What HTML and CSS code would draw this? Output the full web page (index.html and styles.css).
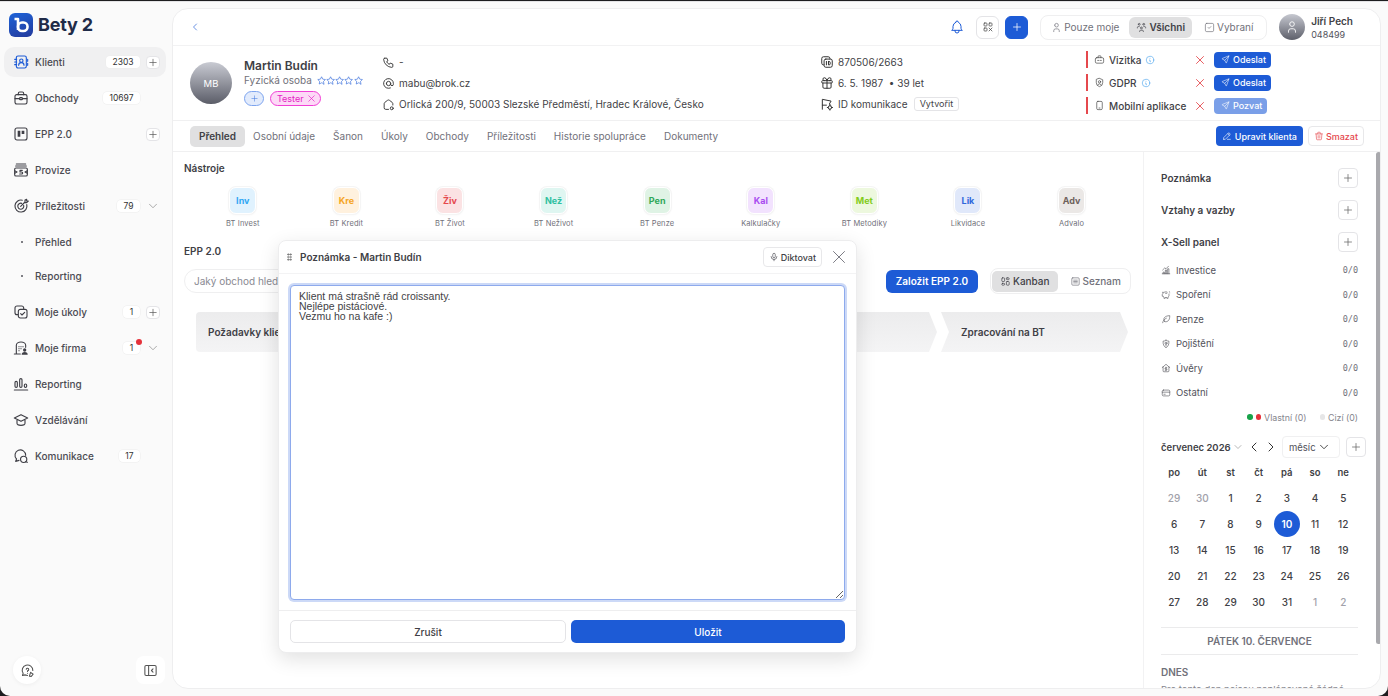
FILE: index.html
```html
<!DOCTYPE html>
<html lang="cs">
<head>
    <meta charset="UTF-8">
    <title>Bety 2 - Klienti</title>
    <link rel="stylesheet" href="styles.css">
</head>
<body>
<svg class="defs" width="0" height="0">
    <symbol id="i-plus" viewBox="0 0 24 24"><path d="M12 5v14M5 12h14"/></symbol>
    <symbol id="i-down" viewBox="0 0 24 24"><path d="M6 9l6 6 6-6"/></symbol>
    <symbol id="i-left" viewBox="0 0 24 24"><path d="M15 6l-6 6 6 6"/></symbol>
    <symbol id="i-right" viewBox="0 0 24 24"><path d="M9 6l6 6-6 6"/></symbol>
    <symbol id="i-x" viewBox="0 0 24 24"><path d="M18 6L6 18M6 6l12 12"/></symbol>
    <symbol id="i-bell" viewBox="0 0 24 24"><path d="M10 5a2 2 0 1 1 4 0a7 7 0 0 1 4 6v3a4 4 0 0 0 2 3H4a4 4 0 0 0 2-3v-3a7 7 0 0 1 4-6M9 17v1a3 3 0 0 0 6 0v-1"/></symbol>
    <symbol id="i-user" viewBox="0 0 24 24"><path d="M8 7a4 4 0 1 0 8 0a4 4 0 1 0-8 0M6 21v-2a4 4 0 0 1 4-4h4a4 4 0 0 1 4 4v2"/></symbol>
    <symbol id="i-group" viewBox="0 0 24 24"><path d="M10 13a2 2 0 1 0 4 0a2 2 0 0 0-4 0M8 21v-1a2 2 0 0 1 2-2h4a2 2 0 0 1 2 2v1M15 5a2 2 0 1 0 4 0a2 2 0 0 0-4 0M17 10h2a2 2 0 0 1 2 2v1M5 5a2 2 0 1 0 4 0a2 2 0 0 0-4 0M3 13v-1a2 2 0 0 1 2-2h2"/></symbol>
    <symbol id="i-check" viewBox="0 0 24 24"><rect x="3" y="3" width="18" height="18" rx="3"/><path d="M9 12l2 2 4-4"/></symbol>
    <symbol id="i-qr" viewBox="0 0 24 24"><rect x="4" y="4" width="6" height="6" rx="1.500"/><rect x="14" y="4" width="6" height="6" rx="1.500"/><rect x="4" y="14" width="6" height="6" rx="1.500"/><path d="M14 14l6 6M20 14l-6 6"/></symbol>
    <symbol id="i-phone" viewBox="0 0 24 24"><path d="M5 4h4l2 5l-2.500 1.500a11 11 0 0 0 5 5l1.500-2.500l5 2v4a2 2 0 0 1-2 2a16 16 0 0 1-15-15a2 2 0 0 1 2-2"/></symbol>
    <symbol id="i-at" viewBox="0 0 24 24"><path d="M8 12a4 4 0 1 0 8 0a4 4 0 1 0-8 0M16 12v1.500a2.500 2.500 0 0 0 5 0v-1.500a9 9 0 1 0-5.500 8.280"/></symbol>
    <symbol id="i-home" viewBox="0 0 24 24"><path d="M12 21H7a3 3 0 0 1-3-3v-7.500a3 3 0 0 1 1.200-2.400l5-3.800a3 3 0 0 1 3.600 0l5 3.800a3 3 0 0 1 1.200 2.400V13"/><circle cx="18" cy="19" r="2.700"/></symbol>
    <symbol id="i-id" viewBox="0 0 24 24"><rect x="7" y="7" width="14" height="14" rx="3"/><path d="M17 7V6a3 3 0 0 0-3-3H6a3 3 0 0 0-3 3v8a3 3 0 0 0 3 3h1M11 11v6M14.500 11v6h1a2 2 0 0 0 2-2v-2a2 2 0 0 0-2-2z"/></symbol>
    <symbol id="i-gift" viewBox="0 0 24 24"><path d="M3 9a1 1 0 0 1 1-1h16a1 1 0 0 1 1 1v2a1 1 0 0 1-1 1H4a1 1 0 0 1-1-1zM12 8v13M19 12v7a2 2 0 0 1-2 2H7a2 2 0 0 1-2-2v-7M7.500 8a2.500 2.500 0 0 1 0-5A4.800 8 0 0 1 12 8a4.800 8 0 0 1 4.500-5a2.500 2.500 0 0 1 0 5"/></symbol>
    <symbol id="i-komu" viewBox="0 0 24 24"><path d="M4 21V4l15 3-3 5 2 2M4 14h7"/><circle cx="17" cy="18" r="3"/><path d="M17 13.500v1.500M17 21v1.500M12.500 18H14M20 18h1.500"/></symbol>
    <symbol id="i-badge" viewBox="0 0 24 24"><rect x="3" y="8" width="18" height="12" rx="3"/><path d="M9 8V5a1 1 0 0 1 1-1h4a1 1 0 0 1 1 1v3M8 14h3M14 14h2"/></symbol>
    <symbol id="i-shield" viewBox="0 0 24 24"><path d="M12 3l7 3v6a9 9 0 0 1-7 9a9 9 0 0 1-7-9V6z"/><circle cx="12" cy="10.500" r="2.500"/><path d="M8.500 17a4 4 0 0 1 7 0"/></symbol>
    <symbol id="i-mobile" viewBox="0 0 24 24"><rect x="6" y="3" width="12" height="18" rx="2.500"/><path d="M11 17.500h2"/></symbol>
    <symbol id="i-info" viewBox="0 0 24 24"><circle cx="12" cy="12" r="9"/><path d="M12 8h.01M11 12h1v4h1"/></symbol>
    <symbol id="i-send" viewBox="0 0 24 24"><path d="M10 14L21 3M21 3l-6.500 18a.55.55 0 0 1-1 0L10 14l-7-3.500a.55.55 0 0 1 0-1z"/></symbol>
    <symbol id="i-pencil" viewBox="0 0 24 24"><path d="M4 20h4L18.500 9.500a2.830 2.830 0 0 0-4-4L4 16v4M13.500 6.500l4 4M13 20h7"/></symbol>
    <symbol id="i-trash" viewBox="0 0 24 24"><path d="M4 7h16M10 11v6M14 11v6M5 7l1 12a2 2 0 0 0 2 2h8a2 2 0 0 0 2-2l1-12M9 7V4a1 1 0 0 1 1-1h4a1 1 0 0 1 1 1v3"/></symbol>
    <symbol id="i-star" viewBox="0 0 24 24"><path d="M12 17.750l-6.170 3.245 1.180-6.873-5-4.867 6.900-1 3.086-6.253 3.086 6.253 6.900 1-5 4.867 1.180 6.873z"/></symbol>
    <symbol id="i-mic" viewBox="0 0 24 24"><path d="M9 6a3 3 0 0 1 6 0v5a3 3 0 0 1-6 0zM5 11a7 7 0 0 0 14 0M12 18v3"/></symbol>
    <symbol id="i-kanban" viewBox="0 0 24 24"><rect x="4" y="4" width="6" height="8" rx="1.500"/><rect x="4" y="16" width="6" height="4" rx="1.500"/><rect x="14" y="4" width="6" height="4" rx="1.500"/><rect x="14" y="12" width="6" height="8" rx="1.500"/></symbol>
    <symbol id="i-list" viewBox="0 0 24 24"><rect x="4" y="4" width="16" height="16" rx="2"/><path d="M8 9h8M8 12h8M8 15h8"/></symbol>
    <symbol id="s-book" viewBox="0 0 24 24"><rect x="5" y="3" width="15" height="18" rx="2.500"/><circle cx="12.500" cy="10" r="2.500"/><path d="M8.500 17a4 4 0 0 1 8 0M2.500 8h3M2.500 12h3M2.500 16h3M22 8v3M22 14v3"/></symbol>
    <symbol id="s-case" viewBox="0 0 24 24"><rect x="3" y="7" width="18" height="14" rx="2.500"/><path d="M8 7V5a2 2 0 0 1 2-2h4a2 2 0 0 1 2 2v2M3 13h7M14 13h7"/><rect x="10" y="11.500" width="4" height="3" rx=".7"/></symbol>
    <symbol id="s-board" viewBox="0 0 24 24"><rect x="3" y="3" width="18" height="18" rx="3"/><path class="solid" d="M7 7h4v9H7zM13 7h4v5h-4z"/></symbol>
    <symbol id="s-cash" viewBox="0 0 24 24"><path d="M5 3h14M4 6h16"/><rect x="2.500" y="9" width="19" height="12" rx="2"/><path d="M14 12.500h-3.500v2.500H13a1.500 1.500 0 0 1 0 3h-3M2.500 13L6 15l-3.500 2M21.500 13L18 15l3.500 2"/></symbol>
    <symbol id="s-target" viewBox="0 0 24 24"><path d="M14 3.300A9 9 0 1 0 20.700 10"/><path d="M13 8a4.500 4.500 0 1 0 3 3"/><path d="M11.500 12.500L18 6M18 6V3l2.500-1v2.500H23L20.500 7H18z"/></symbol>
    <symbol id="s-tasks" viewBox="0 0 24 24"><path d="M16 7V6a3 3 0 0 0-3-3H6a3 3 0 0 0-3 3v7a3 3 0 0 0 3 3h1"/><rect x="8" y="8" width="13" height="13" rx="3"/><path d="M11.500 14.500l2 2 4-4"/></symbol>
    <symbol id="s-firm" viewBox="0 0 24 24"><path d="M2 21h9M5 21V8a7 5 0 0 1 14 0v3M9 10h.01M12 10h.01M15 10h.01M9 13h.01M12 13h.01M9 16h.01"/><circle class="solid" cx="17.500" cy="15" r="2.500"/><path class="solid" d="M13 22a4.500 4 0 0 1 9 0z"/></symbol>
    <symbol id="s-bars" viewBox="0 0 24 24"><path d="M2 21h20"/><rect x="3" y="8" width="3.500" height="9" rx="1.700"/><rect x="10" y="4" width="3.500" height="13" rx="1.700"/><rect x="17" y="12" width="3.500" height="5" rx="1.700"/></symbol>
    <symbol id="s-school" viewBox="0 0 24 24"><path d="M22 9L12 4 2 9l10 5 10-5zM6 11v6c0 1.600 2.700 3 6 3s6-1.400 6-3v-6"/></symbol>
    <symbol id="s-chat" viewBox="0 0 24 24"><path d="M9 18.500L4 20l1.300-3.500A8 8 0 1 1 19 11"/><circle cx="16" cy="17" r="4.700"/><path d="M19 20.500l2.500 1"/></symbol>
    <symbol id="s-help" viewBox="0 0 24 24"><path d="M12 20l-4-1-4 1 1-3.500A8.500 8.500 0 1 1 20.500 12"/><path d="M12 13.500v-1a2 2 0 1 0-2-2.500M12 16.500h.01"/><path d="M17 15l4 3-3 3.500-3-.5z"/></symbol>
    <symbol id="s-collapse" viewBox="0 0 24 24"><rect x="3" y="4" width="18" height="16" rx="2"/><path d="M9 4v16M16 9.500L13.500 12l2.500 2.500"/></symbol>
    <symbol id="x-invest" viewBox="0 0 24 24"><path d="M3 21h18M5 21v-4h3v4M10.500 21V12h3v9M16 21V9h3v12M4 12l5-5 3 2 6-6"/></symbol>
    <symbol id="x-pig" viewBox="0 0 24 24"><path d="M15 5c-1-1-6-1-8 1L4 5l.5 4L3 11v4h2.500l1.500 2v3h3v-2h4v2h3v-3c2-2 3-4 2-7M11 8h3M20 4h.01M21 7h.01"/></symbol>
    <symbol id="x-leaf" viewBox="0 0 24 24"><path d="M4 21c1-5 4-9 9-11M9 18c-3-2-3-6-1-9s7-5 13-5c0 6-1 10-4 12.500S11 19 9 18z"/></symbol>
    <symbol id="x-shield" viewBox="0 0 24 24"><path d="M12 3c2 1.500 4.500 2 7 2 .500 8-2 13-7 16-5-3-7.500-8-7-16 2.500 0 5-.500 7-2z"/><circle cx="12" cy="10" r="2.500"/><path d="M12 12.500V17"/></symbol>
    <symbol id="x-home" viewBox="0 0 24 24"><path d="M3 11l9-8 9 8M5 9v10a2 2 0 0 0 2 2h10a2 2 0 0 0 2-2V9M12 10v7M14 11.500h-3a1.500 1.500 0 0 0 0 3h2a1.500 1.500 0 0 1 0 3h-3"/></symbol>
    <symbol id="x-card" viewBox="0 0 24 24"><rect x="3" y="5" width="18" height="14" rx="3"/><path d="M3 10h18M7 15h3"/></symbol>
</svg>

<div class="window">
    <aside class="sidebar">
        <div class="logo">
            <svg class="logo-mark" viewBox="0 0 24 24"><path d="M5.500 6H9v11"/><rect x="9" y="9.500" width="9.500" height="8.500" rx="4"/></svg>
            <span class="logo-name">Bety 2</span>
        </div>
        <nav class="side-nav">
            <a class="side-item active"><svg class="side-ico blue"><use href="#s-book"/></svg><span class="side-label">Klienti</span><span class="count">2303</span><span class="side-end"><svg class="mini-plus"><use href="#i-plus"/></svg></span></a>
            <a class="side-item"><svg class="side-ico"><use href="#s-case"/></svg><span class="side-label">Obchody</span><span class="count">10697</span><span class="side-end"></span></a>
            <a class="side-item"><svg class="side-ico"><use href="#s-board"/></svg><span class="side-label">EPP 2.0</span><span class="side-end"><svg class="mini-plus"><use href="#i-plus"/></svg></span></a>
            <a class="side-item"><svg class="side-ico"><use href="#s-cash"/></svg><span class="side-label">Provize</span></a>
            <a class="side-item"><svg class="side-ico"><use href="#s-target"/></svg><span class="side-label">Příležitosti</span><span class="count">79</span><span class="side-end"><svg class="mini-down"><use href="#i-down"/></svg></span></a>
            <a class="side-item sub"><span class="dot"></span><span class="side-label">Přehled</span></a>
            <a class="side-item sub"><span class="dot"></span><span class="side-label">Reporting</span></a>
            <a class="side-item"><svg class="side-ico"><use href="#s-tasks"/></svg><span class="side-label">Moje úkoly</span><span class="count small">1</span><span class="side-end"><svg class="mini-plus"><use href="#i-plus"/></svg></span></a>
            <a class="side-item"><svg class="side-ico"><use href="#s-firm"/></svg><span class="side-label">Moje firma</span><span class="count small alert">1</span><span class="side-end"><svg class="mini-down"><use href="#i-down"/></svg></span></a>
            <a class="side-item"><svg class="side-ico"><use href="#s-bars"/></svg><span class="side-label">Reporting</span></a>
            <a class="side-item"><svg class="side-ico"><use href="#s-school"/></svg><span class="side-label">Vzdělávání</span></a>
            <a class="side-item"><svg class="side-ico"><use href="#s-chat"/></svg><span class="side-label">Komunikace</span><span class="count">17</span><span class="side-end"></span></a>
        </nav>
        <div class="side-foot">
            <button class="help-btn"><svg class="side-ico"><use href="#s-help"/></svg></button>
            <button class="collapse-btn"><svg class="side-ico"><use href="#s-collapse"/></svg></button>
        </div>
    </aside>

    <main class="panel">
        <header class="topbar">
            <svg class="back"><use href="#i-left"/></svg>
            <div class="top-right">
                <svg class="bell"><use href="#i-bell"/></svg>
                <button class="square-btn"><svg class="ico-12"><use href="#i-qr"/></svg></button>
                <button class="square-btn primary"><svg class="ico-12"><use href="#i-plus"/></svg></button>
                <div class="scope">
                    <span class="scope-item"><svg class="ico-11"><use href="#i-user"/></svg>Pouze moje</span>
                    <span class="scope-item on"><svg class="ico-11"><use href="#i-group"/></svg>Všichni</span>
                    <span class="scope-item"><svg class="ico-11"><use href="#i-check"/></svg>Vybraní</span>
                </div>
                <div class="me">
                    <span class="me-avatar"><svg class="ico-14"><use href="#i-user"/></svg></span>
                    <div>
                        <div class="me-name">Jiří Pech</div>
                        <div class="me-num">048499</div>
                    </div>
                </div>
            </div>
        </header>

        <section class="client">
            <div class="avatar">MB</div>
            <div class="who">
                <div class="who-name">Martin Budín</div>
                <div class="who-type">Fyzická osoba
                    <span class="stars"><svg><use href="#i-star"/></svg><svg><use href="#i-star"/></svg><svg><use href="#i-star"/></svg><svg><use href="#i-star"/></svg><svg><use href="#i-star"/></svg></span>
                </div>
                <div class="who-tags">
                    <span class="tag-add"><svg><use href="#i-plus"/></svg></span>
                    <span class="tag">Tester <svg><use href="#i-x"/></svg></span>
                </div>
            </div>
            <div class="facts contacts">
                <div class="fact"><svg><use href="#i-phone"/></svg>-</div>
                <div class="fact"><svg><use href="#i-at"/></svg>mabu@brok.cz</div>
                <div class="fact"><svg><use href="#i-home"/></svg>Orlická 200/9, 50003 Slezské Předměstí, Hradec Králové, Česko</div>
            </div>
            <div class="facts personal">
                <div class="fact"><svg><use href="#i-id"/></svg>870506/2663</div>
                <div class="fact"><svg><use href="#i-gift"/></svg>6. 5. 1987 &nbsp;• 39 let</div>
                <div class="fact"><svg><use href="#i-komu"/></svg>ID komunikace <span class="mini-btn">Vytvořit</span></div>
            </div>
            <div class="consents">
                <div class="consent">
                    <svg class="c-ico"><use href="#i-badge"/></svg>
                    <span class="c-name">Vizitka <svg class="c-info"><use href="#i-info"/></svg></span>
                    <svg class="c-x"><use href="#i-x"/></svg>
                    <span class="send-btn"><svg><use href="#i-send"/></svg>Odeslat</span>
                </div>
                <div class="consent">
                    <svg class="c-ico"><use href="#i-shield"/></svg>
                    <span class="c-name">GDPR <svg class="c-info"><use href="#i-info"/></svg></span>
                    <svg class="c-x"><use href="#i-x"/></svg>
                    <span class="send-btn"><svg><use href="#i-send"/></svg>Odeslat</span>
                </div>
                <div class="consent">
                    <svg class="c-ico"><use href="#i-mobile"/></svg>
                    <span class="c-name">Mobilní aplikace</span>
                    <svg class="c-x"><use href="#i-x"/></svg>
                    <span class="send-btn faded"><svg><use href="#i-send"/></svg>Pozvat</span>
                </div>
            </div>
        </section>

        <nav class="tabs">
            <span class="tab on">Přehled</span>
            <span class="tab">Osobní údaje</span>
            <span class="tab">Šanon</span>
            <span class="tab">Úkoly</span>
            <span class="tab">Obchody</span>
            <span class="tab">Příležitosti</span>
            <span class="tab">Historie spolupráce</span>
            <span class="tab">Dokumenty</span>
            <span class="tab-actions">
                <button class="edit-btn"><svg><use href="#i-pencil"/></svg>Upravit klienta</button>
                <button class="del-btn"><svg><use href="#i-trash"/></svg>Smazat</button>
            </span>
        </nav>

        <div class="content">
            <div class="left">
                <h4 class="sec-title">Nástroje</h4>
                <div class="tools">
                    <div class="tool"><span class="tile inv">Inv</span><span class="tool-name">BT Invest</span></div>
                    <div class="tool"><span class="tile kre">Kre</span><span class="tool-name">BT Kredit</span></div>
                    <div class="tool"><span class="tile ziv">Živ</span><span class="tool-name">BT Život</span></div>
                    <div class="tool"><span class="tile nez">Než</span><span class="tool-name">BT Neživot</span></div>
                    <div class="tool"><span class="tile pen">Pen</span><span class="tool-name">BT Penze</span></div>
                    <div class="tool"><span class="tile kal">Kal</span><span class="tool-name">Kalkulačky</span></div>
                    <div class="tool"><span class="tile met">Met</span><span class="tool-name">BT Metodiky</span></div>
                    <div class="tool"><span class="tile lik">Lik</span><span class="tool-name">Likvidace</span></div>
                    <div class="tool"><span class="tile adv">Adv</span><span class="tool-name">Advalo</span></div>
                </div>
                <h4 class="sec-title epp">EPP 2.0</h4>
                <div class="epp-bar">
                    <input class="epp-search" type="text" placeholder="Jaký obchod hledáte?">
                    <button class="epp-new">Založit EPP 2.0</button>
                    <div class="view-switch">
                        <span class="view on"><svg><use href="#i-kanban"/></svg>Kanban</span>
                        <span class="view"><svg><use href="#i-list"/></svg>Seznam</span>
                    </div>
                </div>
                <div class="stages">
                    <div class="stage first">Požadavky klienta</div>
                    <div class="stage"></div>
                    <div class="stage"></div>
                    <div class="stage"></div>
                    <div class="stage last">Zpracování na BT</div>
                </div>
            </div>

            <aside class="right">
                <div class="r-head">Poznámka<button class="r-add"><svg><use href="#i-plus"/></svg></button></div>
                <div class="r-head">Vztahy a vazby<button class="r-add"><svg><use href="#i-plus"/></svg></button></div>
                <div class="r-head">X-Sell panel<button class="r-add"><svg><use href="#i-plus"/></svg></button></div>
                <ul class="xsell">
                    <li><svg><use href="#x-invest"/></svg>Investice<span>0/0</span></li>
                    <li><svg><use href="#x-pig"/></svg>Spoření<span>0/0</span></li>
                    <li><svg><use href="#x-leaf"/></svg>Penze<span>0/0</span></li>
                    <li><svg><use href="#x-shield"/></svg>Pojištění<span>0/0</span></li>
                    <li><svg><use href="#x-home"/></svg>Úvěry<span>0/0</span></li>
                    <li><svg><use href="#x-card"/></svg>Ostatní<span>0/0</span></li>
                </ul>
                <div class="legend">
                    <i class="leg green"></i><i class="leg red"></i><span>Vlastní (0)</span>
                    <i class="leg grey"></i><span>Cizí (0)</span>
                </div>
                <div class="cal-head">
                    <span class="cal-month">červenec 2026</span>
                    <svg class="cal-caret"><use href="#i-down"/></svg>
                    <svg class="cal-arrow"><use href="#i-left"/></svg>
                    <svg class="cal-arrow"><use href="#i-right"/></svg>
                    <span class="cal-view">měsíc<svg><use href="#i-down"/></svg></span>
                    <button class="r-add"><svg><use href="#i-plus"/></svg></button>
                </div>
                <div class="cal">
                    <b>po</b><b>út</b><b>st</b><b>čt</b><b>pá</b><b>so</b><b>ne</b>
                    <span class="off">29</span><span class="off">30</span><span>1</span><span>2</span><span>3</span><span>4</span><span>5</span>
                    <span>6</span><span>7</span><span>8</span><span>9</span><span class="today">10</span><span>11</span><span>12</span>
                    <span>13</span><span>14</span><span>15</span><span>16</span><span>17</span><span>18</span><span>19</span>
                    <span>20</span><span>21</span><span>22</span><span>23</span><span>24</span><span>25</span><span>26</span>
                    <span>27</span><span>28</span><span>29</span><span>30</span><span>31</span><span class="off">1</span><span class="off">2</span>
                </div>
                <div class="day-title">PÁTEK 10. ČERVENCE</div>
                <div class="day-sub">DNES</div>
                <div class="day-note">Pro tento den nejsou naplánované žádné</div>
            </aside>
            <div class="scrollbar"></div>
        </div>
    </main>

    <!-- Note dialog -->
    <div class="dialog">
        <div class="dlg-head">
            <span class="grip"></span>
            <span class="dlg-title">Poznámka - Martin Budín</span>
            <button class="dictate"><svg><use href="#i-mic"/></svg>Diktovat</button>
            <svg class="dlg-close"><use href="#i-x"/></svg>
        </div>
        <div class="dlg-body">
            <textarea class="note">Klient má strašně rád croissanty.
Nejlépe pistáciové.
Vezmu ho na kafe :)</textarea>
        </div>
        <div class="dlg-foot">
            <button class="btn-cancel">Zrušit</button>
            <button class="btn-save">Uložit</button>
        </div>
    </div>
</div>
</body>
</html>
```

FILE: styles.css
```css
* {
    box-sizing: border-box;
}
html, body {
    margin: 0;
    height: 100%;
    overflow: hidden;
}
body {
    background: #1d1d1f;
    padding-top: 1px;
    font-family: Inter, "Liberation Sans", sans-serif;
    font-size: 10px;
    color: #3f3f46;
}
.defs {
    position: absolute;
}
svg {
    fill: none;
    stroke: currentColor;
    stroke-width: 1.5;
    stroke-linecap: round;
    stroke-linejoin: round;
    flex: none;
}
.solid {
    fill: currentColor;
    stroke: none;
}
button {
    font-family: inherit;
    cursor: pointer;
}
.ico-11 { width: 11px; height: 11px; }
.ico-12 { width: 12px; height: 12px; }
.ico-14 { width: 14px; height: 14px; }

.window {
    position: relative;
    display: flex;
    height: 695px;
    background: #fafafa;
    border-radius: 0 0 10px 10px;
    border-top: 1px solid #e3e3e5;
    overflow: hidden;
}

/* Sidebar */
.sidebar {
    position: relative;
    width: 172px;
    flex: none;
    padding-left: 4px;
    padding-right: 6px;
}
.logo {
    display: flex;
    align-items: center;
    gap: 5px;
    height: 45px;
    padding: 0 0 0 5px;
}
.logo-mark {
    width: 24px;
    height: 24px;
    border-radius: 6px;
    background: linear-gradient(160deg, #1e63d8, #243a9c);
    color: #fff;
    stroke-width: 2.6;
    stroke-linecap: butt;
}
.logo-name {
    font: 700 18px/24px Inter, sans-serif;
    color: #1f2b48;
    letter-spacing: -0.2px;
}
.side-nav {
    display: flex;
    flex-direction: column;
    gap: 6px;
}
.side-item {
    display: flex;
    align-items: center;
    height: 30px;
    padding: 0 6px 0 9px;
    border-radius: 10px;
    color: #4b4b52;
    font-size: 10px;
    font-weight: 500;
}
.side-item.active {
    background: #f0f0f1;
}
.side-item.sub + .side-item.sub {
    margin-top: -2px;
}
.side-ico {
    width: 16px;
    height: 16px;
    color: #3f3f46;
    margin-right: 6px;
    stroke-width: 1.7;
}
.side-ico.blue {
    color: #1d5bd6;
}
.dot {
    width: 2px;
    height: 2px;
    margin: 0 12px 0 8px;
    background: #55555c;
    border-radius: 50%;
}
.side-label {
    flex: 1;
}
.count {
    position: relative;
    display: block;
    height: 12px;
    line-height: 12px;
    padding: 0 6.5px;
    background: #fff;
    border-radius: 4px;
    box-shadow: 0 0 0 .5px #ececec;
    color: #333;
    font-size: 8.5px;
    font-weight: 400;
}
.count.small {
    padding: 0;
    width: 17px;
    text-align: center;
}
.count.alert::after {
    content: "";
    position: absolute;
    top: -3px;
    right: -2px;
    width: 6px;
    height: 6px;
    border-radius: 50%;
    background: #e5323b;
}
.side-end {
    display: flex;
    justify-content: center;
    width: 14px;
    margin-left: 6px;
}
.mini-plus {
    width: 14px;
    height: 13px;
    background: #fff;
    border: 1px solid #e4e4e7;
    border-radius: 4px;
    color: #555;
}
.mini-down {
    width: 14px;
    height: 14px;
    color: #888;
    stroke-width: 1.2;
}
.side-foot {
    position: absolute;
    left: 13px;
    right: 7px;
    top: 654px;
    display: flex;
    justify-content: space-between;
    align-items: center;
}
.help-btn {
    display: flex;
    align-items: center;
    justify-content: center;
    width: 28px;
    height: 28px;
    border: none;
    border-radius: 50%;
    background: #fff;
    box-shadow: 0 1px 4px rgba(0, 0, 0, .05);
    padding: 0;
}
.collapse-btn {
    display: flex;
    align-items: center;
    justify-content: center;
    width: 29px;
    height: 28px;
    border: none;
    border-radius: 8px;
    background: #fff;
    padding: 0;
}
.help-btn .side-ico,
.collapse-btn .side-ico {
    margin: 0;
    width: 15px;
    height: 15px;
    color: #555;
}

/* Main panel */
.panel {
    display: flex;
    flex-direction: column;
    width: 1209px;
    height: 681px;
    margin-top: 6px;
    background: #fff;
    border: 1px solid #eeeeef;
    border-radius: 16px;
    overflow: hidden;
}
.topbar {
    display: flex;
    align-items: center;
    justify-content: space-between;
    height: 37px;
    flex: none;
    padding: 0 27px 0 16px;
    border-bottom: 1px solid #f2f2f3;
}
.back {
    width: 12px;
    height: 12px;
    color: #3b6fd8;
}
.top-right {
    display: flex;
    align-items: center;
}
.bell {
    width: 16px;
    height: 16px;
    color: #1d5bd6;
    margin-right: 11px;
}
.square-btn {
    display: flex;
    align-items: center;
    justify-content: center;
    width: 23px;
    height: 23px;
    padding: 0;
    margin-right: 6px;
    border: 1px solid #e4e4e7;
    border-radius: 6px;
    background: #fff;
    color: #444;
}
.square-btn.primary {
    background: #1d5bd6;
    border-color: #1d5bd6;
    color: #fff;
    margin-right: 12px;
}
.scope {
    display: flex;
    align-items: center;
    height: 25px;
    width: 227px;
    padding: 2px;
    border: 1px solid #efeff0;
    border-radius: 8px;
    margin-right: 12px;
}
.scope-item {
    display: flex;
    align-items: center;
    gap: 2px;
    height: 21px;
    padding: 0 9px 0 8px;
    border-radius: 6px;
    color: #71717a;
    font-size: 10px;
    white-space: nowrap;
}
.scope-item.on {
    background: #e0e0e1;
    color: #3f3f46;
    font-weight: 600;
    padding: 0 7px;
    margin: 0 4px 0 1px;
}
.me {
    display: flex;
    align-items: center;
    gap: 6px;
}
.me-avatar {
    display: flex;
    align-items: center;
    justify-content: center;
    width: 26px;
    height: 26px;
    border-radius: 50%;
    background: linear-gradient(#c6c8d0, #5d5f6a);
    color: #fff;
}
.me-name {
    font-weight: 600;
    font-size: 10px;
    line-height: 14px;
}
.me-num {
    font-size: 9px;
    line-height: 13px;
    color: #52525b;
}

/* Client header */
.client {
    position: relative;
    display: flex;
    align-items: flex-start;
    height: 75px;
    flex: none;
    padding: 6px 0 0 17px;
    border-bottom: 1px solid #f0f0f1;
}
.avatar {
    display: flex;
    align-items: center;
    justify-content: center;
    width: 42px;
    height: 42px;
    margin: 10px 12px 0 0;
    flex: none;
    border-radius: 50%;
    background: linear-gradient(#c9cbd3, #5b5d68);
    color: #fff;
    font-size: 9.5px;
}
.who {
    width: 138px;
    flex: none;
}
.who-name {
    font-size: 12px;
    font-weight: 600;
    line-height: 17px;
    margin-top: 5px;
}
.who-type {
    display: flex;
    align-items: center;
    gap: 5px;
    color: #71717a;
    font-size: 10px;
    line-height: 13px;
}
.stars {
    display: flex;
}
.stars svg {
    width: 9.2px;
    height: 9.2px;
    color: #1d5bd6;
}
.who-tags {
    display: flex;
    gap: 6px;
    margin-top: 4px;
}
.tag-add {
    display: flex;
    align-items: center;
    justify-content: center;
    width: 20px;
    height: 15px;
    background: #e2ebfc;
    border: 1px solid #7da4ee;
    border-radius: 8px;
    color: #4a7ee0;
}
.tag-add svg {
    width: 9px;
    height: 9px;
}
.tag {
    display: flex;
    align-items: center;
    gap: 2px;
    height: 15px;
    padding: 0 3px 0 6px;
    background: #fdd9f7;
    border: 1px solid #f13fd6;
    border-radius: 8px;
    color: #e423c4;
    font-size: 9px;
}
.tag svg {
    width: 11px;
    height: 11px;
}
.facts {
    flex: none;
    display: flex;
    flex-direction: column;
    gap: 5px;
    padding-top: 2px;
}
.contacts {
    width: 438px;
}
.personal {
    width: 266px;
}
.fact {
    display: flex;
    align-items: center;
    gap: 4px;
    height: 16px;
    font-size: 10px;
    white-space: nowrap;
}
.fact svg {
    width: 13px;
    height: 13px;
    color: #333;
    stroke-width: 1.7;
}
.personal svg {
    width: 14px;
    height: 14px;
}
.mini-btn {
    display: inline-block;
    height: 14px;
    line-height: 12px;
    padding: 0 5px;
    border: 1px solid #e4e4e7;
    border-radius: 3px;
    font-size: 9px;
    margin-left: 2px;
}
.consents {
    display: flex;
    flex-direction: column;
    gap: 6px;
    flex: none;
    margin-top: -1px;
}
.consent {
    display: flex;
    align-items: center;
    height: 17px;
    border-left: 2px solid #e5484d;
    padding-left: 6px;
    font-size: 10px;
    font-weight: 500;
}
.c-ico {
    width: 11px;
    height: 11px;
    margin-right: 4px;
    color: #444;
}
.c-name {
    display: flex;
    align-items: center;
    gap: 4px;
    width: 84px;
    white-space: nowrap;
}
.c-info {
    width: 10px;
    height: 10px;
    color: #4aa3ee;
}
.c-x {
    width: 14px;
    height: 14px;
    margin-right: 7px;
    color: #e5484d;
}
.send-btn {
    display: flex;
    align-items: center;
    gap: 3px;
    height: 16px;
    padding: 0 5px 0 7px;
    background: #1d5bd6;
    border-radius: 4px;
    color: #fff;
    font-size: 9px;
    font-weight: 500;
}
.send-btn.faded {
    background: #7a9fe8;
}
.send-btn svg {
    width: 9px;
    height: 9px;
}

/* Tabs */
.tabs {
    display: flex;
    align-items: center;
    height: 31px;
    flex: none;
    padding-left: 17px;
    border-bottom: 1px solid #f0f0f1;
    gap: 8px;
}
.tab {
    font-size: 10px;
    color: #71717a;
    margin-right: 10px;
    white-space: nowrap;
}
.tab.on {
    margin-right: 0;
    padding: 0 9px;
    height: 21px;
    line-height: 21px;
    background: #e0e0e1;
    border-radius: 5px;
    color: #3f3f46;
    font-weight: 600;
}
.tab-actions {
    display: flex;
    gap: 5px;
    margin-left: auto;
    margin-right: 16px;
}
.edit-btn, .del-btn {
    display: flex;
    align-items: center;
    gap: 3px;
    height: 20px;
    padding: 0 6px;
    font-size: 9px;
    font-weight: 500;
    border-radius: 4px;
}
.edit-btn svg, .del-btn svg {
    width: 10px;
    height: 10px;
}
.edit-btn {
    background: #1d5bd6;
    border: none;
    color: #fff;
}
.del-btn {
    gap: 2px;
    padding: 0 5px;
    background: #fff;
    border: 1px solid #e8e8ea;
    color: #e5484d;
}

/* Content */
.content {
    display: flex;
    flex: 1;
    min-height: 0;
}
.left {
    width: 971px;
    flex: none;
    padding: 0 12px 0 11px;
    border-right: 1px solid #f2f2f3;
}
.sec-title {
    margin: 0;
    font-size: 10px;
    font-weight: 600;
    line-height: 14px;
    padding-top: 9px;
}
.tools {
    display: grid;
    grid-template-columns: repeat(9, 103.6px);
    margin: 12px 0 0 7px;
}
.tool {
    display: flex;
    flex-direction: column;
    align-items: center;
}
.tile {
    display: flex;
    align-items: center;
    justify-content: center;
    width: 27px;
    height: 27px;
    border-radius: 7px;
    border: 1px solid #fff;
    box-shadow: 0 0 0 1px #f5f5f5, 0 1px 3px rgba(0, 0, 0, .04);
    font-size: 9px;
    font-weight: 700;
}
.tool-name {
    margin-top: 5px;
    font-size: 7.5px;
    line-height: 10px;
    letter-spacing: .1px;
    color: #71717a;
}
.inv { background: #e0f2fe; color: #30a7f4; }
.kre { background: #fff1de; color: #f5a524; }
.ziv { background: #fbe2e3; color: #e5484d; }
.nez { background: #dff6f1; color: #2ebfa0; }
.pen { background: #dff3e5; color: #30a85a; }
.kal { background: #f2e2fe; color: #a94cf0; }
.met { background: #edf8de; color: #82cc1c; }
.lik { background: #e0e8fa; color: #2f66dc; }
.adv { background: #ebe8e6; color: #6f625c; }
.sec-title.epp {
    padding-top: 15px;
}
.epp-bar {
    display: flex;
    align-items: center;
    height: 26px;
    margin-top: 10px;
}
.epp-search {
    width: 400px;
    height: 24px;
    margin-right: auto;
    padding: 0 9px;
    border: 1px solid #efeff0;
    border-radius: 12px;
    font-family: inherit;
    font-size: 10px;
    outline: none;
}
.epp-search::placeholder {
    color: #8a8a92;
}
.epp-new {
    width: 92px;
    height: 23px;
    margin: 0 12px 0 8px;
    flex: none;
    background: #1d5bd6;
    color: #fff;
    border: none;
    border-radius: 6px;
    font-size: 10px;
    font-weight: 600;
}
.view-switch {
    display: flex;
    align-items: center;
    width: 141px;
    height: 26px;
    flex: none;
    padding: 1px;
    border: 1px solid #efeff0;
    border-radius: 8px;
}
.view {
    display: flex;
    align-items: center;
    gap: 2px;
    height: 21px;
    padding: 0 9px;
    border-radius: 5px;
    font-size: 10px;
    font-weight: 500;
    color: #71717a;
}
.view.on {
    padding: 0 8px;
    margin-right: 3px;
    background: #e0e0e1;
    color: #3f3f46;
}
.view svg {
    width: 11px;
    height: 11px;
}
.stages {
    display: flex;
    gap: 4px;
    margin: 18px 3px 0 12px;
}
.stage {
    flex: 1;
    height: 40px;
    line-height: 40px;
    padding-left: 20px;
    background: linear-gradient(#ececed, #f4f4f5);
    clip-path: polygon(0 0, calc(100% - 8px) 0, 100% 50%, calc(100% - 8px) 100%, 0 100%, 8px 50%);
    font-size: 10px;
    font-weight: 600;
    white-space: nowrap;
}
.stage.last {
    flex: none;
    width: 187px;
}
.stage.first {
    padding-left: 12px;
    clip-path: polygon(0 0, calc(100% - 8px) 0, 100% 50%, calc(100% - 8px) 100%, 0 100%);
    border-radius: 4px 0 0 4px;
}

/* Right panel */
.right {
    flex: none;
    width: 232px;
    padding: 0 18px 0 17px;
}
.r-head {
    display: flex;
    align-items: center;
    justify-content: space-between;
    height: 20px;
    margin-top: 12px;
    font-size: 10px;
    font-weight: 600;
}
.r-head:first-child {
    margin-top: 16px;
}
.r-add {
    display: flex;
    align-items: center;
    justify-content: center;
    width: 20px;
    height: 20px;
    padding: 0;
    flex: none;
    background: #fff;
    border: 1px solid #e4e4e7;
    border-radius: 4px;
    color: #666;
}
.r-add svg {
    width: 12px;
    height: 12px;
}
.xsell {
    list-style: none;
    margin: 6px 0 0;
    padding: 0;
}
.xsell li {
    display: flex;
    align-items: center;
    height: 24.5px;
    color: #52525b;
    font-size: 9.5px;
}
.xsell svg {
    width: 10px;
    height: 10px;
    margin-right: 5px;
    color: #55555c;
}
.xsell span {
    margin-left: auto;
    font: 8.5px "DejaVu Sans Mono", monospace;
    color: #71717a;
}
.legend {
    display: flex;
    align-items: center;
    justify-content: flex-end;
    height: 24px;
    font-size: 8.8px;
    color: #85858d;
}
.leg {
    width: 5.5px;
    height: 5.5px;
    border-radius: 50%;
    margin-right: 3px;
}
.leg.green { background: #18a34a; }
.leg.red { background: #e5323b; }
.leg.grey { background: #e6e6e7; margin-left: 13px; }
.cal-head {
    display: flex;
    align-items: center;
    height: 22px;
    margin-top: 7px;
    margin-right: -8px;
}
.cal-month {
    width: 70px;
    flex: none;
    font-size: 9.5px;
    font-weight: 600;
    white-space: nowrap;
}
.cal-caret {
    width: 12px;
    height: 12px;
    margin: 0 2px 0 1px;
    color: #888;
    stroke-width: 1.2;
}
.cal-arrow {
    width: 16px;
    height: 16px;
    margin-right: 1px;
    color: #333;
}
.cal-view {
    display: flex;
    align-items: center;
    justify-content: space-between;
    width: 58px;
    height: 22px;
    padding: 0 8px 0 6px;
    margin-left: 2px;
    margin-right: 6px;
    flex: none;
    border: 1px solid #f0f0f1;
    border-radius: 4px;
    font-size: 9.5px;
    color: #52525b;
}
.cal-view svg {
    width: 14px;
    height: 14px;
    color: #333;
}
.cal {
    display: grid;
    grid-template-columns: repeat(7, 28.2px);
    grid-template-rows: 25px;
    grid-auto-rows: 26px;
    justify-items: center;
    align-items: center;
    margin: 2px 0 0 -1px;
    font-size: 10px;
    font-weight: 500;
}
.cal b {
    font-size: 9.5px;
    font-weight: 600;
}
.cal .off {
    color: #a1a1aa;
}
.cal .today {
    display: flex;
    align-items: center;
    justify-content: center;
    width: 26px;
    height: 26px;
    border-radius: 50%;
    background: #1d5bd6;
    color: #fff;
    font-weight: 600;
}
.day-title {
    margin-top: 12px;
    height: 28px;
    line-height: 26px;
    text-align: center;
    border-top: 1px solid #ebebec;
    border-bottom: 1px solid #ebebec;
    font-size: 10px;
    font-weight: 600;
    color: #71717a;
}
.day-sub {
    margin-top: 11px;
    font-size: 10px;
    line-height: 12px;
    font-weight: 600;
    color: #71717a;
}
.day-note {
    margin-top: 6px;
    font-size: 9.5px;
    line-height: 12px;
    color: #85858d;
    white-space: nowrap;
}
.scrollbar {
    width: 5px;
    height: 492px;
    flex: none;
    background: #a9a9ad;
    border-radius: 3px;
}

/* Note dialog */
.dialog {
    position: absolute;
    left: 278px;
    top: 238px;
    display: flex;
    flex-direction: column;
    width: 579px;
    height: 413px;
    background: #fff;
    border: 1px solid #ededee;
    border-radius: 8px;
    box-shadow: 0 6px 20px rgba(0, 0, 0, .12);
}
.dlg-head {
    display: flex;
    align-items: center;
    height: 33px;
    flex: none;
    padding: 0 6px 0 8px;
    border-bottom: 1px solid #f3f3f4;
}
.grip {
    width: 5px;
    height: 8px;
    margin-right: 8px;
    background: radial-gradient(circle, #666 .8px, transparent 1px) 0 0 / 2.5px 2.7px;
}
.dlg-title {
    flex: 1;
    font-size: 10px;
    font-weight: 600;
}
.dictate {
    display: flex;
    align-items: center;
    gap: 2px;
    height: 20px;
    padding: 0 5px;
    margin-right: 6px;
    background: #fff;
    border: 1px solid #e8e8ea;
    border-radius: 4px;
    color: #3f3f46;
    font-size: 9px;
    font-weight: 500;
}
.dictate svg {
    width: 10px;
    height: 10px;
}
.dlg-close {
    width: 22px;
    height: 22px;
    color: #71717a;
    stroke-width: 1;
}
.dlg-body {
    flex: 1;
    padding: 11px 11px 10px 11px;
    border-bottom: 1px solid #eeeeef;
}
.note {
    display: block;
    width: 100%;
    height: 100%;
    padding: 5px 8px;
    border: 1px solid #8eaaec;
    border-radius: 4px;
    box-shadow: 0 0 0 2px #ccd9f7;
    outline: none;
    font: 10.5px/10px "Liberation Sans", sans-serif;
    color: #3f3f46;
}
.dlg-foot {
    display: flex;
    gap: 5px;
    padding: 9px 11px;
}
.btn-cancel, .btn-save {
    flex: 1;
    height: 23px;
    border-radius: 5px;
    font-size: 10px;
    font-weight: 500;
}
.btn-cancel {
    background: #fff;
    border: 1px solid #e4e4e7;
    color: #3f3f46;
}
.btn-save {
    background: #1d5bd6;
    border: none;
    color: #fff;
}
```
